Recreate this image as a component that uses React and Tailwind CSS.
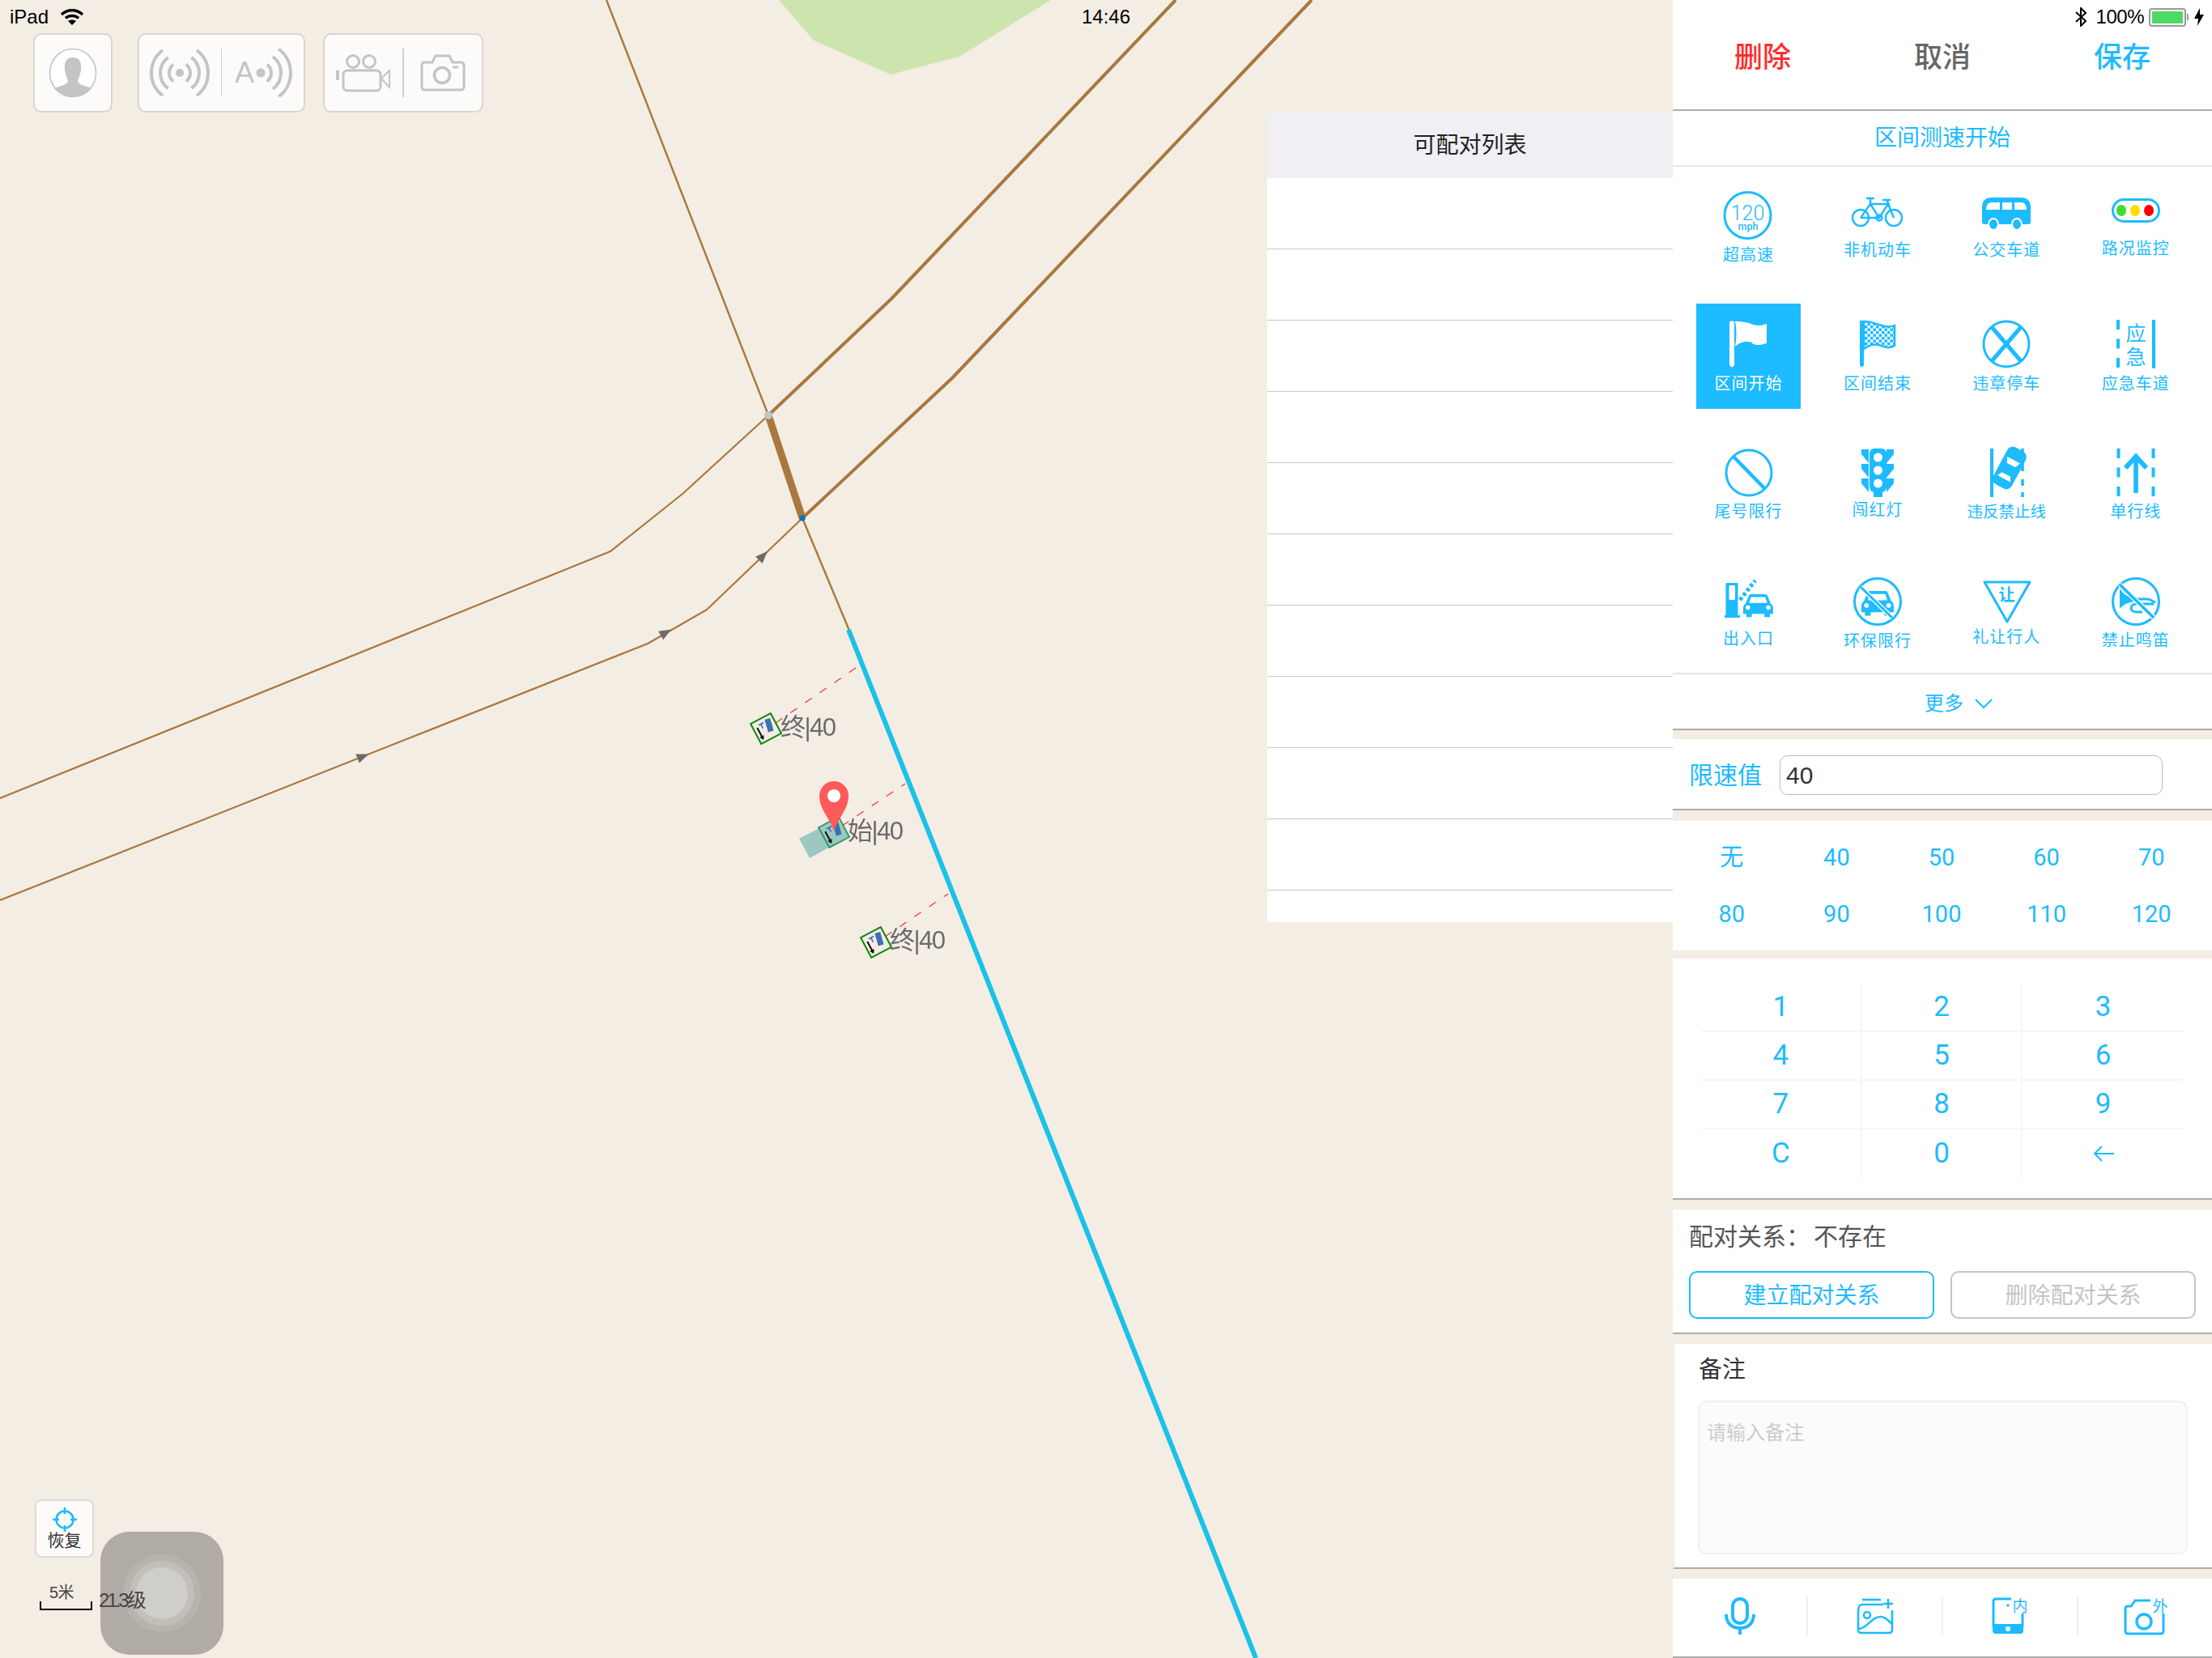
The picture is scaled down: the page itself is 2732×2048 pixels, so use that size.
import React from "react";

const B = "#1dbbff";
const G = "#c4c4c4";

function Waves({ cx, cy, rs = [13, 24, 35], both = true, sw = 4, color = G }) {
  const arc = (r) => {
    const x = (r * 0.6).toFixed(1);
    const y = (r * 0.8).toFixed(1);
    return `M ${x} ${-y} A ${r} ${r} 0 0 1 ${x} ${y}`;
  };
  return (
    <g transform={`translate(${cx} ${cy})`} fill="none" stroke={color} strokeWidth={sw}>
      {rs.map((r) => (
        <path key={r} d={arc(r)} />
      ))}
      {both && rs.map((r) => <path key={"m" + r} d={arc(r)} transform="scale(-1 1)" />)}
    </g>
  );
}

const Box = ({ w = 60, h = 60, children }) => (
  <svg width={w} height={h} viewBox={`0 0 ${w} ${h}`} className="overflow-visible">
    {children}
  </svg>
);

const I120 = () => (
  <Box>
    <circle cx="28.5" cy="30" r="28.5" fill="none" stroke={B} strokeWidth="3" />
    <text x="28.5" y="36" textAnchor="middle" fontSize="25" fontFamily="Roboto" fontWeight="300" fill={B}>120</text>
    <text x="29" y="48" textAnchor="middle" fontSize="12.5" fontFamily="Roboto" fontWeight="500" fill={B}>mph</text>
  </Box>
);
const IBike = () => (
  <Box>
    <g fill="none" stroke={B} strokeWidth="2.4">
      <circle cx="9" cy="33" r="10" />
      <circle cx="50" cy="33" r="10" />
      <path d="M9 33 L21 16 L43 16 L50 33 M21 16 L32 33 L43 16 M9 33 L32 33" />
      <path d="M16 9 H26 M21 9 L21 16" />
      <path d="M41 10 L45 20 M36 11 H46" />
      <circle cx="32" cy="33" r="3.5" />
    </g>
  </Box>
);
const IBus = () => (
  <Box>
    <path d="M0 38 V20 C0 11 5 8 13 8 H47 C55 8 60 11 60 20 V38 C60 41 58 41 55 41 H5 C2 41 0 41 0 38 Z" fill={B} />
    <path d="M5 23 C5 17 8 14 12 14 H22 V23 Z M25 14 H37 V23 H25 Z M40 14 H48 C52 14 55 17 55 23 H40 Z" fill="#fff" />
    <ellipse cx="14" cy="41" rx="6" ry="7" fill={B} stroke="#fff" strokeWidth="2" />
    <ellipse cx="43" cy="41" rx="6" ry="7" fill={B} stroke="#fff" strokeWidth="2" />
  </Box>
);
const ILights = () => (
  <Box>
    <rect x="1.5" y="10.5" width="57" height="27" rx="13.5" fill="#fff" stroke={B} strokeWidth="3" />
    <ellipse cx="12" cy="24" rx="6" ry="7" fill="#3fdc2e" />
    <ellipse cx="29" cy="24" rx="6" ry="7" fill="#ffdc00" />
    <ellipse cx="46" cy="24" rx="6" ry="7" fill="#ff0000" />
  </Box>
);
const IFlag = () => (
  <Box>
    <path d="M6 3 C6 1 12 1 12 3 V56 L9 59 L6 56 Z" fill="#fff" />
    <path d="M13 2 C22 2 28 3 35 6 C41 8 47 7 52 5 V29 C46 31 40 32 35 30 C34 27 30 27 25 27 C20 28 16 30 13 33 C15 22 15 12 13 2 Z" fill="#fff" />
  </Box>
);
const ICheck = () => (
  <Box>
    <defs>
      <pattern id="chk" width="7" height="7" patternUnits="userSpaceOnUse">
        <rect width="7" height="7" fill="#fff" />
        <rect width="3.5" height="3.5" fill={B} />
        <rect x="3.5" y="3.5" width="3.5" height="3.5" fill={B} />
      </pattern>
    </defs>
    <path d="M8 1 H13 V56 L10.5 59 L8 56 Z" fill={B} />
    <path d="M13 2 C22 2 28 5 35 7 C41 9 47 9 51 7 V32 C46 35 40 35 34 32 C27 29 20 31 13 36 Z" fill="url(#chk)" stroke={B} strokeWidth="2.5" />
  </Box>
);
const ICross = () => (
  <Box>
    <circle cx="30" cy="30" r="28" fill="none" stroke={B} strokeWidth="3" />
    <path d="M12 9 L48 51 M48 9 L12 51" stroke={B} strokeWidth="5" />
  </Box>
);
const IEmergency = () => (
  <Box>
    <path d="M8 0 V60" stroke={B} strokeWidth="4" strokeDasharray="12 11.5" />
    <path d="M52 0 V60" stroke={B} strokeWidth="4" />
    <text x="30" y="26" textAnchor="middle" fontSize="25" fill={B} fontWeight="400">应</text>
    <text x="30" y="55" textAnchor="middle" fontSize="25" fill={B} fontWeight="400">急</text>
  </Box>
);
const INo = () => (
  <Box>
    <circle cx="30" cy="30" r="28" fill="none" stroke={B} strokeWidth="3" />
    <path d="M11 10 L50 50" stroke={B} strokeWidth="4.5" />
  </Box>
);
const ITraffic = () => (
  <Box>
    <g fill={B}>
      <path d="M19 1 H10 V7 L19 18 Z M41 1 H50 V7 L41 18 Z M19 19 H10 V25 L19 36 Z M41 19 H50 V25 L41 36 Z M19 37 H10 V43 L19 54 Z M41 37 H50 V43 L41 54 Z" />
      <rect x="20" y="0" width="21" height="54" rx="6" />
      <rect x="25" y="53" width="11" height="7" />
    </g>
    <circle cx="30.5" cy="11" r="5.5" fill="#fff" />
    <circle cx="30.5" cy="27" r="5.5" fill="#fff" />
    <circle cx="30.5" cy="43" r="5.5" fill="#fff" />
  </Box>
);
const ICarLine = () => (
  <Box>
    <path d="M12 0 V60" stroke={B} strokeWidth="4" />
    <path d="M50 0 V60" stroke={B} strokeWidth="3.6" strokeDasharray="28 10 8 8 6 0" />
    <g transform="rotate(28 34 24)">
      <rect x="21" y="-2" width="26" height="52" rx="8" fill={B} />
      <path d="M25 13 H43 L40 20 H28 Z M28 33 H40 L43 39 H25 Z" fill="#fff" />
    </g>
  </Box>
);
const IArrowLane = () => (
  <Box>
    <path d="M8.5 0 V60 M51.5 0 V60" stroke={B} strokeWidth="4" strokeDasharray="12 11.5" />
    <path d="M17 24 L30 10 L43 24" fill="none" stroke={B} strokeWidth="6" />
    <rect x="27.2" y="10" width="5.6" height="45" fill={B} />
  </Box>
);
const CarShape = ({ s = 1, x = 0, y = 0 }) => (
  <g transform={`translate(${x} ${y}) scale(${s})`}>
    <path d="M3 12 L7 2 C8 0.5 9 0 11 0 H27 C29 0 30 0.5 31 2 L35 12 C37 13 38 15 38 18 V25 H34 V29 H27 V25 H11 V29 H4 V25 H0 V18 C0 15 1 13 3 12 Z" fill={B} />
    <path d="M7.5 11 L10 3.5 H28 L30.5 11 Z" fill="#fff" />
    <circle cx="6" cy="17" r="2.8" fill="#fff" />
    <circle cx="32" cy="17" r="2.8" fill="#fff" />
  </g>
);
const IGate = () => (
  <Box>
    <path d="M1.5 8 C1.5 7 2.5 7 3 7 H16.5 V47 H19 V50 H0 V47 H1.5 Z" fill={B} />
    <rect x="5.5" y="10" width="7.5" height="18" rx="1.5" fill="#fff" />
    <path d="M19 28 L38 4" stroke={B} strokeWidth="5" strokeDasharray="4 3" />
    <CarShape x="23" y="21" s="0.97" />
  </Box>
);
const ICarNo = () => (
  <Box>
    <circle cx="30" cy="30" r="28.5" fill="none" stroke={B} strokeWidth="3" />
    <CarShape x="10" y="17" s="1.05" />
    <path d="M9 12 L48 50" stroke="#fff" strokeWidth="5.5" />
    <path d="M9 12 L48 50" stroke={B} strokeWidth="3" />
  </Box>
);
const ITriangle = () => (
  <Box>
    <path d="M3 6 H59 L31 55 Z" fill="none" stroke={B} strokeWidth="3" strokeLinejoin="round" />
    <text x="30.5" y="29" textAnchor="middle" fontSize="20" fontWeight="700" fill={B}>让</text>
  </Box>
);
const IHorn = () => (
  <Box>
    <circle cx="30" cy="30" r="28.5" fill="none" stroke={B} strokeWidth="3" />
    <path d="M10 14 C14 20 20 25 29 26 V30 C20 31 14 34 10 39 Z" fill={B} />
    <path d="M29 27 H44 C49 27 52 31 54 31 M38 43 H31 C27 43 24 41 24 38 C24 35 27 33 31 33 H52" fill="none" stroke={B} strokeWidth="3" />
    <path d="M10 9 L52 50" stroke="#fff" strokeWidth="6" />
    <path d="M10 9 L52 50" stroke={B} strokeWidth="3.6" />
  </Box>
);

const signs = [
  { I: I120, t: "超高速", cls: "mt-[9px] text-[20px] tracking-[1px]" },
  { I: IBike, t: "非机动车", cls: "mt-[3px] text-[20px] tracking-[1px]" },
  { I: IBus, t: "公交车道", cls: "mt-[3px] text-[20px] tracking-[1px]" },
  { I: ILights, t: "路况监控", cls: "mt-[1px] text-[20px] tracking-[1px]" },
  { I: IFlag, t: "区间开始", cls: "mt-[9px] text-[20px] tracking-[1px]", on: true },
  { I: ICheck, t: "区间结束", cls: "mt-[9px] text-[20px] tracking-[1px]" },
  { I: ICross, t: "违章停车", cls: "mt-[9px] text-[20px] tracking-[1px]" },
  { I: IEmergency, t: "应急车道", cls: "mt-[9px] text-[20px] tracking-[1px]" },
  { I: INo, t: "尾号限行", cls: "mt-[8px] text-[20px] tracking-[1px]" },
  { I: ITraffic, t: "闯红灯", cls: "mt-[6px] text-[20px] tracking-[1px]" },
  { I: ICarLine, t: "违反禁止线", cls: "mt-[8px] text-[19.5px] tracking-[0px]" },
  { I: IArrowLane, t: "单行线", cls: "mt-[8px] text-[20px] tracking-[1px]" },
  { I: IGate, t: "出入口", cls: "mt-[6px] text-[20px] tracking-[1px]" },
  { I: ICarNo, t: "环保限行", cls: "mt-[9px] text-[20px] tracking-[1px]" },
  { I: ITriangle, t: "礼让行人", cls: "mt-[4px] text-[20px] tracking-[1px]" },
  { I: IHorn, t: "禁止鸣笛", cls: "mt-[8px] text-[20px] tracking-[1px]" },
];

const Marker = ({ x, y, color = "#0a8a0a" }) => (
  <g transform={`translate(${x} ${y}) rotate(-28)`}>
    <rect x="-14" y="-14" width="28" height="28" fill="none" stroke={color} strokeWidth="2" />
    <path d="M-9 -6 L-9 9" stroke="#111" strokeWidth="2" />
    <path d="M-12 6 L-9 11 L-6 6 Z" fill="#111" />
    <path d="M-6 -8 H1 M-3 -8 V-2" stroke="#3d6fb5" strokeWidth="1.6" />
    <rect x="2" y="-10" width="7" height="16" fill="#3d6fb5" transform="rotate(12 5 -2)" />
  </g>
);

function MapDrawing() {
  const tri = (x, y, a) => (
    <path d="M-8 -6 L7 0 L-8 6 Z" fill="#6f6a63" transform={`translate(${x} ${y}) rotate(${a})`} />
  );
  return (
    <svg width="2066" height="2048" viewBox="0 0 2066 2048" className="absolute left-0 top-0">
      <path d="M962 0 L1005 50 L1100 92 L1185 70 L1298 0 Z" fill="#cde4ae" />
      <g fill="none" stroke="#a8783d" strokeLinejoin="round">
        <path d="M749 0 L949 513" strokeWidth="2.4" />
        <path d="M991 640 L1049 779" strokeWidth="2.4" />
        <path d="M949 513 L991 640" strokeWidth="9" />
        <path d="M949 513 L1101 369 L1452 0" strokeWidth="4" />
        <path d="M991 640 L1176 467 L1620 0" strokeWidth="4" />
        <path d="M949 513 L843 610 L754 681 L0 986" strokeWidth="2.2" />
        <path d="M991 640 L873 753 L800 795 L0 1112" strokeWidth="2.2" />
      </g>
      <path d="M1048 778 L1551 2048" stroke="#1ac1e8" strokeWidth="6" fill="none" />
      <circle cx="949" cy="513" r="5" fill="#c4c4c4" />
      <circle cx="991" cy="640" r="3.6" fill="#0a6fc2" />
      {tri(943, 686, -45)}
      {tri(823, 781, -30)}
      {tri(449, 934, -22)}
      <g stroke="#f0303c" strokeWidth="1.2" strokeDasharray="10 12" fill="none">
        <path d="M958 893 L1060 823" />
        <path d="M1040 1020 L1118 968" />
        <path d="M1093 1157 L1171 1104" />
      </g>
      <Marker x={946} y={900} />
      <path d="M987 1036 L1035 1011 L1048 1033 L1000 1060 Z" fill="#9cc8c2" />
      <Marker x={1030} y={1028} color="#2f9a6a" />
      <Marker x={1082} y={1164} />
      <path d="M1030 1027 C1025 1010 1012 1000 1012 983 A18 18 0 1 1 1048 983 C1048 1000 1035 1010 1030 1027 Z" fill="#ff5a5a" />
      <circle cx="1030" cy="983" r="8" fill="#fff" />
    </svg>
  );
}

const ToolBox = ({ className, children }) => (
  <div className={`flex h-[98px] items-center rounded-[10px] border-2 border-[#d9d6d1] bg-[#fcfbfa] ${className}`}>
    {children}
  </div>
);

function Toolbar() {
  return (
    <div className="absolute left-[41px] top-[41px] flex gap-[31px]">
      <ToolBox className="w-[98px] justify-center">
        <svg width="60" height="62" viewBox="0 0 60 62">
          <ellipse cx="30" cy="31" rx="28.5" ry="29.5" fill="#fff" stroke={G} strokeWidth="1.6" />
          <path d="M30 12 C38 12 41 18 40 27 C39 34 37 38 36 41 C36 44 40 46 53 50 C47 57 39 61 30 61 C21 61 13 57 7 50 C20 46 24 44 24 41 C23 38 21 34 20 27 C19 18 22 12 30 12 Z" fill={G} />
        </svg>
      </ToolBox>
      <div className="flex gap-[22px]">
        <ToolBox className="w-[207px]">
          <div className="flex flex-1 items-center justify-center">
            <svg width="80" height="60" viewBox="0 0 80 60">
              <Waves cx={40} cy={30} />
              <circle cx="40" cy="30" r="5" fill={G} />
            </svg>
          </div>
          <div className="h-[60px] w-[1.5px] bg-[#cfcfcf]" />
          <div className="flex flex-1 items-center justify-center">
            <svg width="80" height="60" viewBox="0 0 80 60">
              <text x="5" y="42" fontSize="36" fontFamily="Liberation Sans" fontWeight="300" fill={G}>A</text>
              <circle cx="37" cy="30" r="5.5" fill={G} />
              <Waves cx={37} cy={30} rs={[13, 25, 37]} both={false} />
            </svg>
          </div>
        </ToolBox>
        <ToolBox className="w-[198px]">
          <div className="flex flex-1 items-center justify-center">
            <svg width="68" height="48" viewBox="0 0 68 48" fill="none" stroke={G} strokeWidth="3">
              <circle cx="21" cy="10" r="7.5" />
              <circle cx="41" cy="10" r="7.5" />
              <rect x="9" y="21" width="46" height="25" rx="5" />
              <path d="M56 31 L66 21 V42 Z" strokeWidth="2" />
              <path d="M2 21 V33" strokeWidth="4" />
            </svg>
          </div>
          <div className="h-[60px] w-[1.5px] bg-[#cfcfcf]" />
          <div className="flex flex-1 items-center justify-center">
            <svg width="56" height="46" viewBox="0 0 56 46" fill="none" stroke={G} strokeWidth="3">
              <path d="M5 10 H15 L19 2 H36 L40 10 H50 C53 10 54 12 54 14 V40 C54 43 53 44 50 44 H5 C3 44 2 43 2 40 V14 C2 12 3 10 5 10 Z" />
              <circle cx="27" cy="26" r="9.5" strokeWidth="3.5" />
              <path d="M40 16 H47" />
            </svg>
          </div>
        </ToolBox>
      </div>
    </div>
  );
}

function StatusLeft() {
  return (
    <div className="absolute left-[12px] top-[7px] flex h-[28px] items-center gap-[14px] text-[24px] text-black">
      <span>iPad</span>
      <svg width="30" height="22" viewBox="0 0 30 22" fill="none" stroke="#000" strokeWidth="3.5">
        <path d="M2 8 C9 1 21 1 28 8" />
        <path d="M7 12.5 C11 8.5 19 8.5 23 12.5" />
        <path d="M15 21 L10 16 C13 14 17 14 20 16 Z" fill="#000" stroke="none" />
      </svg>
    </div>
  );
}

function ListPanel() {
  const rows = Array.from({ length: 10 }, (_, i) => i);
  return (
    <div className="absolute left-[1565px] top-[140px] h-[999px] w-[501px] overflow-hidden bg-white">
      <div className="flex h-[80px] items-center justify-center bg-[#efeff4] text-[28px] text-[#222]">可配对列表</div>
      {rows.map((r) => (
        <div key={r} className="h-[88px] border-b border-[#c8c8c8]" />
      ))}
    </div>
  );
}

function MapArea() {
  const label = "absolute text-[31px] leading-[36px] tracking-[-1.5px] text-[#6b6b6b] blur-[0.4px]";
  return (
    <div className="relative h-[2048px] w-[2066px] shrink-0 overflow-hidden">
      <MapDrawing />
      <span className={`${label} left-[964px] top-[881px]`}>终|40</span>
      <span className={`${label} left-[1047px] top-[1009px]`}>始|40</span>
      <span className={`${label} left-[1099px] top-[1144px]`}>终|40</span>
      <StatusLeft />
      <span className="absolute left-[1336px] top-[7px] text-[24px] leading-[28px] font-medium text-black">14:46</span>
      <Toolbar />
      <ListPanel />
      <div className="absolute left-[43px] top-[1852px] flex h-[72px] w-[73px] flex-col items-center rounded-[8px] border-2 border-[#dedbd6] bg-[#fcfbfa] pt-[8px]">
        <svg width="30" height="30" viewBox="0 0 30 30" fill="none" stroke={B} strokeWidth="2.6">
          <circle cx="15" cy="15" r="10.5" />
          <path d="M15 0 V8 M15 22 V30 M0 15 H8 M22 15 H30" />
        </svg>
        <span className="mt-[-1px] text-[21px] leading-[24px] text-[#333]">恢复</span>
      </div>
      <span className="absolute left-[61px] top-[1955px] text-[20px] leading-[24px] tracking-[-0.5px] text-[#444]">5米</span>
      <div className="absolute left-[49px] top-[1978px] h-[11px] w-[65px] border-x-2 border-b-2 border-black" />
      <div className="absolute left-[124px] top-[1892px] flex h-[152px] w-[152px] items-center justify-center rounded-[36px] bg-[#b0aba4]">
        <div className="flex h-[96px] w-[96px] items-center justify-center rounded-full bg-[#b8b3ad]">
          <div className="flex h-[80px] w-[80px] items-center justify-center rounded-full bg-[#c2bfb9]">
            <div className="h-[64px] w-[64px] rounded-full bg-[#d0cec9]" />
          </div>
        </div>
      </div>
      <span className="absolute left-[122px] top-[1962px] text-[24px] leading-[30px] tracking-[-3px] text-[#444]">21.3级</span>
    </div>
  );
}

function SpeedPanel() {
  const vals = ["无", "40", "50", "60", "70", "80", "90", "100", "110", "120"];
  return (
    <div className="h-[160px] bg-white pl-[8px] pr-[10px] pt-[11px]">
      <div className="grid grid-cols-5 grid-rows-[70px_70px]">
        {vals.map((v) => (
          <div key={v} className="flex items-center justify-center font-['Roboto','Noto_Sans_CJK_SC',sans-serif] text-[29px] text-[#1dbbff]">{v}</div>
        ))}
      </div>
    </div>
  );
}

function Keypad() {
  const keys = ["1", "2", "3", "4", "5", "6", "7", "8", "9", "C", "0", "←"];
  return (
    <div className="h-[298px] border-b-2 border-[#aeaca8] bg-white px-[35px] pt-[31px]">
      <div className="grid grid-cols-3 grid-rows-[60px_60px_60px_60px]">
        {keys.map((k, i) => (
          <div
            key={k}
            className={`flex items-center justify-center font-['Roboto',sans-serif] text-[35px] text-[#1dbbff] ${i % 3 !== 2 ? "border-r-2 border-[#f6f6f6]" : ""} ${i < 9 ? "border-b-2 border-b-[#f6f6f6]" : ""}`}
          >
            {k === "←" ? (
              <svg width="26" height="20" viewBox="0 0 26 20" fill="none" stroke={B} strokeWidth="2">
                <path d="M26 10 H2 M11 1 L2 10 L11 19" />
              </svg>
            ) : (
              k
            )}
          </div>
        ))}
      </div>
    </div>
  );
}

function BottomBar() {
  const Div = () => <div className="h-[50px] w-[2px] bg-[#efefef]" />;
  const Cell = ({ children }) => <div className="flex flex-1 items-center justify-center">{children}</div>;
  return (
    <div className="flex h-[98px] items-center border-b-2 border-[#aeaca8] bg-white pb-[4px]">
      <Cell>
        <svg width="38" height="46" viewBox="0 0 38 46" fill="none" stroke={B} strokeWidth="4">
          <rect x="10" y="2" width="18" height="30" rx="9" />
          <path d="M2 21 C2 33 10 38 19 38 C28 38 36 33 36 21 M19 38 V46" />
        </svg>
      </Cell>
      <Div />
      <Cell>
        <svg width="46" height="46" viewBox="0 0 46 46" fill="none" stroke={B} strokeWidth="2.6">
          <path d="M2 18 V40 C2 43 3 44 6 44 H40 C42 44 44 43 44 40 V16 M2 18 C2 12 3 9 7 9 H33 M7 3 H30" />
          <path d="M39 2 V14 M33 8 H45" />
          <circle cx="13" cy="22" r="4" />
          <path d="M3 39 C14 38 18 24 30 24 C36 24 40 30 44 33" />
        </svg>
      </Cell>
      <Div />
      <Cell>
        <svg width="46" height="46" viewBox="0 0 46 46" fill="none" className="overflow-visible">
          <path d="M2 36 V5 C2 3 3 2 5 2 H24 M38 20 V36" stroke={B} strokeWidth="3" />
          <path d="M1 33 H39 V41 C39 44 38 45 35 45 H5 C2 45 1 44 1 41 Z" fill={B} />
          <circle cx="20" cy="39" r="3" fill="#fff" />
          <circle cx="20" cy="10" r="1.8" fill={B} />
          <text x="35" y="18" textAnchor="middle" fontSize="19" fill={B}>内</text>
        </svg>
      </Cell>
      <Div />
      <Cell>
        <svg width="54" height="46" viewBox="0 0 54 46" fill="none" stroke={B} strokeWidth="3" className="overflow-visible">
          <path d="M33 4 H14 L9 11 H5 C3 11 2 12 2 14 V41 C2 44 3 45 5 45 H46 C48 45 49 44 49 41 V20" />
          <circle cx="25" cy="30" r="9" strokeWidth="3.5" />
          <text x="45" y="18" textAnchor="middle" fontSize="19" fill={B} stroke="none">外</text>
        </svg>
      </Cell>
    </div>
  );
}

function RightPanel() {
  return (
    <div className="flex h-[2048px] w-[666px] shrink-0 flex-col bg-[#f4ede4]">
      <div className="h-[137px] border-b-2 border-[#aeaca8] bg-white">
        <div className="flex h-[42px] items-center justify-end pr-[10px] text-[24px] text-black">
          <svg width="16" height="24" viewBox="0 0 16 24" fill="none" stroke="#000" strokeWidth="2" className="mr-[11px]">
            <path d="M2 6 L14 17 L8 23 V1 L14 7 L2 18" />
          </svg>
          <span className="tracking-[-0.5px]">100%</span>
          <div className="ml-[6px] h-[23px] w-[46px] rounded-[4px] border-2 border-[#999] p-[2px]">
            <div className="h-full w-full rounded-[1px] bg-[#4cd964]" />
          </div>
          <div className="ml-[1px] h-[8px] w-[2px] bg-[#999]" />
          <svg width="12" height="22" viewBox="0 0 12 22" fill="#000" className="ml-[7px]">
            <path d="M7 0 L0 13 H5 L4 22 L12 8 H7 Z" />
          </svg>
        </div>
        <div className="grid h-[58px] grid-cols-3 items-center text-center text-[35px] font-medium">
          <span className="text-[#ff2d2d]">删除</span>
          <span className="text-[#666]">取消</span>
          <span className="text-[#1dbbff]">保存</span>
        </div>
      </div>
      <div className="flex h-[69px] items-center justify-center border-b-2 border-[#e8e8e8] bg-white text-[28px] text-[#1dbbff]">
        区间测速开始
      </div>
      <div className="h-[627px] border-b-2 border-[#e5e5e5] bg-white pl-[29px] pt-[10px]">
        <div className="grid grid-cols-[repeat(4,129px)] grid-rows-[repeat(4,130px)] gap-x-[30.4px] gap-y-[29px]">
          {signs.map(({ I, t, cls, on }) => (
            <div key={t} className={`flex flex-col items-center pt-[20px] ${on ? "bg-[#1dbbff] text-white" : "text-[#1dbbff]"}`}>
              <div className="h-[60px] w-[60px]">
                <I />
              </div>
              <span className={`whitespace-nowrap leading-[20px] ${cls}`}>{t}</span>
            </div>
          ))}
        </div>
      </div>
      <div className="flex h-[69px] items-center justify-center gap-[14px] border-b-2 border-[#aeaca8] bg-white pl-[40px] pt-[5px] text-[24px] text-[#1dbbff]">
        <span>更多</span>
        <svg width="22" height="14" viewBox="0 0 22 14" fill="none" stroke={B} strokeWidth="2">
          <path d="M1 2 L11 12 L21 2" />
        </svg>
      </div>
      <div className="mt-[11px] flex h-[88px] items-center border-b-2 border-[#aeaca8] bg-white pl-[20px] pt-[3px]">
        <span className="w-[112px] text-[30px] text-[#1dbbff]">限速值</span>
        <div className="flex h-[49px] w-[473px] items-center rounded-[10px] border border-[#bbb] pl-[7px] text-[30px] text-[#333]">40</div>
      </div>
      <div className="mt-[13px]"><SpeedPanel /></div>
      <div className="mt-[10px]"><Keypad /></div>
      <div className="mt-[12px] h-[154px] border-b-2 border-[#aeaca8] bg-white px-[20px]">
        <div className="flex h-[66px] items-center text-[30px] text-[#555]">
          <span className="w-[154px]">配对关系：</span>
          <span>不存在</span>
        </div>
        <div className="mt-[10px] flex gap-[20px]">
          <div className="flex h-[59px] w-[303px] items-center justify-center rounded-[10px] border-2 border-[#1dbbff] pt-[2px] text-[28px] text-[#1dbbff]">建立配对关系</div>
          <div className="flex h-[59px] w-[303px] items-center justify-center rounded-[10px] border-2 border-[#c4c4c4] pt-[2px] text-[28px] text-[#c4c4c4]">删除配对关系</div>
        </div>
      </div>
      <div className="mt-[12px] h-[278px] border-b-2 border-l-2 border-[#aeaca8] border-l-[#f4ede4] bg-white pl-[29px] pr-[30px]">
        <div className="flex h-[66px] items-center pl-[1px] text-[29px] text-[#333]">备注</div>
        <div className="mt-[4px] h-[190px] rounded-[10px] border-2 border-[#f0f0f0] bg-[#fbfbfb] pl-[9px] pt-[24px] text-[24px] leading-[28px] text-[#ccc]">请输入备注</div>
      </div>
      <div className="mt-[12px]"><BottomBar /></div>
    </div>
  );
}

export default function App() {
  return (
    <div className="flex h-[2048px] w-[2732px] overflow-hidden bg-[#f4ede4] font-['Liberation_Sans','Noto_Sans_CJK_SC',sans-serif]">
      <MapArea />
      <RightPanel />
    </div>
  );
}
